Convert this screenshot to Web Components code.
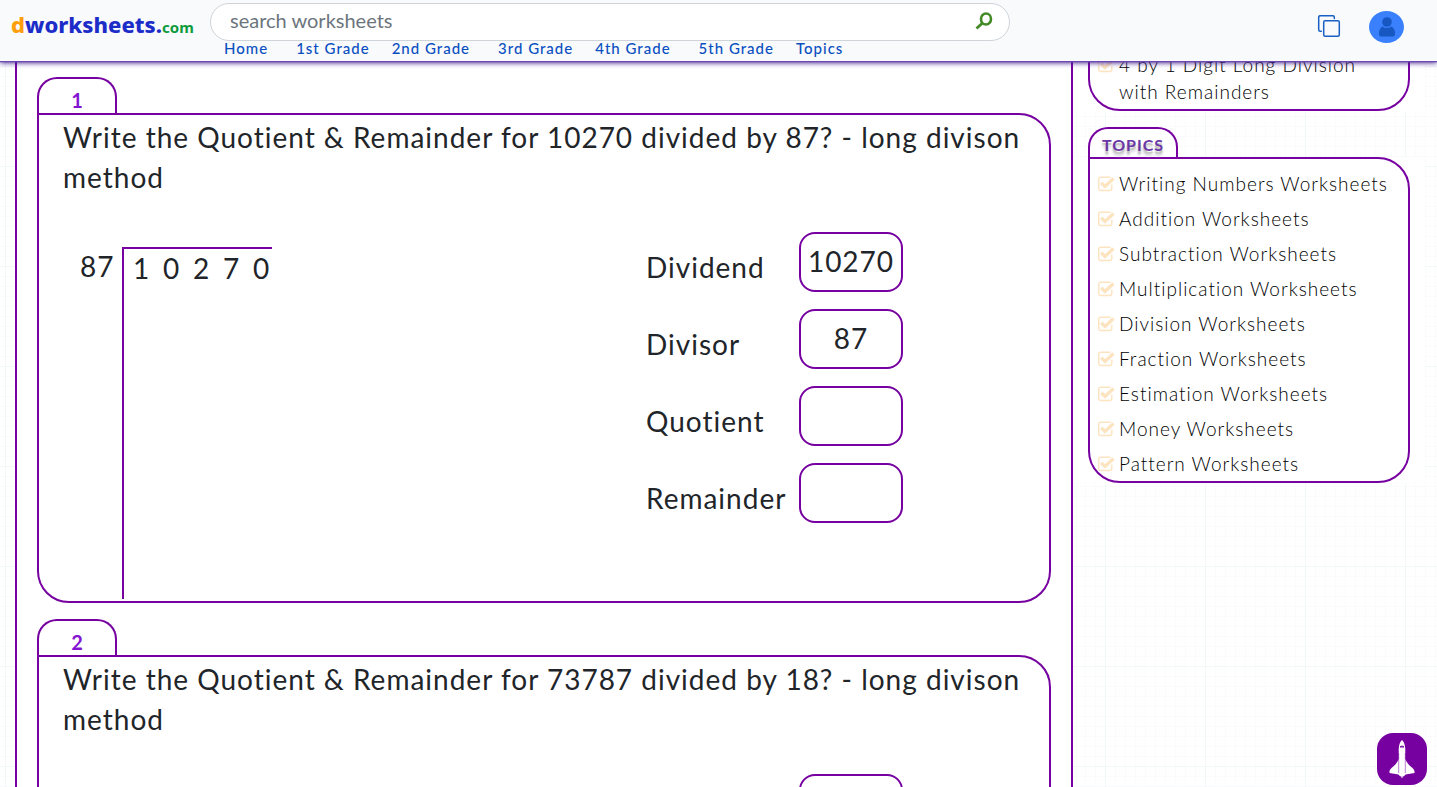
<!DOCTYPE html>
<html lang="en">
<head>
<meta charset="utf-8">
<title>dworksheets.com - Long Division Worksheets</title>
<style>
  :root { --purple: #7600a0; --ink: #212529; --link: #0a4fc0; }
  html { scrollbar-width: none; }
  body {
    margin: 0;
    color: var(--ink);
    font-family: Lato, "Noto Sans", sans-serif;
    background-color: #fff;
    background-image:
      linear-gradient(#f2f7f8 1px, transparent 1px),
      linear-gradient(90deg, #f2f7f8 1px, transparent 1px),
      linear-gradient(#fafbfc 1px, transparent 1px),
      linear-gradient(90deg, #fafbfc 1px, transparent 1px);
    background-size: 100px 100px, 100px 100px, 10px 10px, 10px 10px;
    background-position: 5px 66px, 5px 66px, 5px 6px, 5px 6px;
  }
</style>
</head>
<body>
<worksheet-page></worksheet-page>

<script>
const define = (name, html, setup) => {
  const template = document.createElement('template');
  template.innerHTML = `<style>*, ::before, ::after { box-sizing: border-box; }</style>` + html;
  customElements.define(name, class extends HTMLElement {
    constructor() {
      super();
      this.attachShadow({ mode: 'open' }).append(template.content.cloneNode(true));
    }
    connectedCallback() { if (setup) setup(this, this.shadowRoot); }
  });
};

define('site-logo', `
  <style>
    :host { display: block; }
    a { display: block; text-decoration: none; font: 800 22px/28px "Noto Sans", sans-serif; color: #1c2cc8; white-space: nowrap; }
    .d { color: #ff9d0a; }
    .com { color: #0f9a3c; font-size: 15px; font-weight: 700; }
  </style>
  <a href="#home"><span class="d">d</span>worksheets.<span class="com">com</span></a>`);

define('search-box', `
  <style>
    :host { display: block; }
    form { display: flex; align-items: center; height: 38px; padding: 0 16px 2px 19px; background: #fff; border: 1px solid #ced4da; border-radius: 19px; }
    input { flex: 1; min-width: 0; border: 0; padding: 0 0 2px; outline: 0; background: none; font: 400 20px/28px Lato, sans-serif; color: #212529; }
    input::placeholder { color: #6c757d; opacity: 1; }
    button { border: 0; padding: 0; background: none; display: flex; }
  </style>
  <form role="search">
    <input type="text" aria-label="search worksheets" placeholder="search worksheets">
    <button type="button" aria-label="Search">
      <svg width="18" height="18" viewBox="0 0 18 18" fill="none" stroke="#438a26">
        <ellipse cx="11" cy="7" rx="5" ry="5.500" stroke-width="2.600"/>
        <path d="M7.500 11 1.500 16.500" stroke-width="2.800"/>
      </svg>
    </button>
  </form>`);

define('grade-nav', `
  <style>
    :host { display: block; }
    nav { display: flex; gap: 28px; padding-left: 14px; }
    div { display: flex; gap: 22px; }
    a { font-size: 15px; line-height: 14px; font-weight: 500; letter-spacing: 1px; color: var(--link); text-decoration: none; white-space: nowrap; }
  </style>
  <nav>
    <div><a href="#home">Home</a></div>
    <div><a href="#g1">1st Grade</a><a href="#g2">2nd Grade</a></div>
    <div><a href="#g3">3rd Grade</a><a href="#g4">4th Grade</a></div>
    <div><a href="#g5">5th Grade</a><a href="#topics">Topics</a></div>
  </nav>`);

define('site-header', `
  <style>
    :host { display: block; position: sticky; top: 0; z-index: 2; }
    header { display: flex; align-items: flex-start; height: 61px; padding-right: 33px; background: #f8fafc; box-shadow: 0 1px 1px #6c48b0, 0 2px 5px #4a2b94; }
    site-logo { width: 210px; padding: 10px 0 0 11px; }
    .middle { width: 800px; padding-top: 3px; }
    .tools { margin-left: auto; display: flex; align-items: center; gap: 28px; padding-top: 11px; }
    button { display: flex; padding: 0; border: 0; background: none; }
    .avatar { width: 35px; height: 32px; border-radius: 50%; background: #3a80fc; align-items: center; justify-content: center; }
  </style>
  <header>
    <site-logo></site-logo>
    <div class="middle"><search-box></search-box><grade-nav></grade-nav></div>
    <div class="tools">
      <button type="button" aria-label="Copy">
        <svg width="24" height="24" viewBox="0 1 24 24" fill="none" stroke="#1a60c4" stroke-width="1.500" stroke-linejoin="round" stroke-linecap="round">
          <rect x="6.700" y="6.700" width="15.600" height="15.600" rx="1.500"/>
          <path d="M17.300 4.500V3.200A1.500 1.500 0 0 0 15.800 1.700H3.200A1.500 1.500 0 0 0 1.700 3.200V15.800A1.500 1.500 0 0 0 3.200 17.300H4.300"/>
        </svg>
      </button>
      <button type="button" class="avatar" aria-label="Account">
        <svg width="16" height="20" viewBox="0 0 16 20" fill="#1757c2">
          <circle cx="8" cy="5" r="4.800"/>
          <path d="M3.500 9.500Q8 12.600 12.500 9.500Q16 11.500 16 16V17.500Q16 19.500 14 19.500H2Q0 19.500 0 17.500V16Q0 11.500 3.500 9.500Z"/>
        </svg>
      </button>
    </div>
  </header>`);

define('tab-card', `
  <style>
    :host { display: block; }
    .tab { display: flex; justify-content: center; width: var(--tab-width, 80px); height: var(--tab-height, 36px); border: 2px solid var(--purple); border-bottom: 0; border-radius: 20px 20px 0 0; background: #fff; }
    .plate { margin: 0 -15px; padding: 0 15px; background: #fff; }
    .body { border: 2px solid var(--purple); border-radius: 0 32px 32px 32px; background: #fff; }
    :host([tabless]) .tab { display: none; }
  </style>
  <div class="tab"><slot name="tab"></slot></div>
  <div class="plate"><div class="body"><slot></slot></div></div>`);

define('division-question', `
  <style>
    :host { display: block; --tab-width: 80px; --tab-height: 36px; }
    h2 { margin: 0; font-size: 20px; line-height: 42px; font-weight: 700; color: #8414d2; }
    .body { display: flex; flex-direction: column; height: 486px; padding-top: 2px; font-size: 28px; font-weight: 400; letter-spacing: 1px; }
    p { margin: 0; padding: 0 24px; line-height: 40px; }
    .work { flex: 1; display: grid; grid-template-columns: 60% 1fr; padding-top: 35px; }
    .long { display: flex; padding: 15px 0 2px 41px; line-height: 38px; }
    .divisor { width: 42px; }
    .bracket { display: flex; width: 150px; border: solid var(--purple); border-width: 2px 0 0 2px; }
    .bracket span { flex: none; width: 30px; padding-left: 9px; }
    .answers { display: flex; flex-direction: column; gap: 17px; }
    .row { display: flex; }
    label { width: 154px; padding: 15px 0 0 1px; line-height: 40px; white-space: nowrap; }
    input { width: 104px; height: 60px; padding: 0 0 3px; border: 2px solid var(--purple); border-radius: 16px; background: #fff; text-align: center; font: inherit; letter-spacing: inherit; color: inherit; outline: 0; }
  </style>
  <tab-card>
    <h2 slot="tab"></h2>
    <div class="body">
      <p></p>
      <div class="work">
        <div class="long"><span class="divisor"></span><div class="bracket"></div></div>
        <div class="answers">
          <div class="row"><label for="dividend">Dividend</label><input id="dividend" type="text" readonly></div>
          <div class="row"><label for="divisor">Divisor</label><input id="divisor" type="text" readonly></div>
          <div class="row"><label for="quotient">Quotient</label><input id="quotient" type="text"></div>
          <div class="row"><label for="remainder">Remainder</label><input id="remainder" type="text"></div>
        </div>
      </div>
    </div>
  </tab-card>`, (host, root) => {
    const { number, dividend, divisor } = host.dataset;
    root.querySelector('h2').textContent = number;
    root.querySelector('p').textContent = `Write the Quotient & Remainder for ${dividend} divided by ${divisor}? - long divison method`;
    root.querySelector('.divisor').textContent = divisor;
    root.querySelector('.bracket').replaceChildren(...[...dividend].map(digit => {
      const cell = document.createElement('span');
      cell.textContent = digit;
      return cell;
    }));
    root.querySelector('#dividend').value = dividend;
    root.querySelector('#divisor').value = divisor;
  });

define('check-link', `
  <style>
    :host { display: block; }
    a { display: flex; padding: 4px 8px; font-size: 19px; line-height: 27px; font-weight: 300; letter-spacing: 1px; color: #000; text-decoration: none; }
    svg { flex: none; width: 17px; height: 16px; margin: 6px 4px 0 0; }
  </style>
  <a href="#worksheet">
    <svg viewBox="0 0 17 16" fill="none" stroke="#fde4c0">
      <path d="M13.800 8.500V12.500A2 2 0 0 1 11.800 14.500H2.700A2 2 0 0 1 .700 12.500V3.200A2 2 0 0 1 2.700 1.200H12.500" stroke-width="1.400"/>
      <path d="M3.200 6.800 7 10.500 15.500 2.500" stroke-width="3.400"/>
    </svg>
    <span><slot></slot></span>
  </a>`);

define('side-bar', `
  <style>
    :host { display: flex; flex-direction: column; gap: 16px; --tab-width: 90px; --tab-height: 30px; }
    .list { padding-top: 7px; }
    .related { display: flex; flex-direction: column; justify-content: flex-end; height: 116px; padding-right: 24px; }
    .topics { height: 322px; }
    h3 { margin: 0; font-size: 16px; line-height: 32px; font-weight: 700; letter-spacing: 1px; color: #6a35a5; text-shadow: 0 3px 1px #c4c2bd, 0 5px 3px #c9c7d8; }
  </style>
  <tab-card tabless>
    <div class="list related"><check-link>4 by 1 Digit Long Division with Remainders</check-link></div>
  </tab-card>
  <tab-card>
    <h3 slot="tab">TOPICS</h3>
    <div class="list topics">
      <check-link>Writing Numbers Worksheets</check-link>
      <check-link>Addition Worksheets</check-link>
      <check-link>Subtraction Worksheets</check-link>
      <check-link>Multiplication Worksheets</check-link>
      <check-link>Division Worksheets</check-link>
      <check-link>Fraction Worksheets</check-link>
      <check-link>Estimation Worksheets</check-link>
      <check-link>Money Worksheets</check-link>
      <check-link>Pattern Worksheets</check-link>
    </div>
  </tab-card>`);

define('shuttle-button', `
  <style>
    :host { display: block; position: fixed; right: 10px; bottom: 2px; z-index: 3; }
    button { display: flex; align-items: center; justify-content: center; width: 50px; height: 52px; padding: 0; border: 0; border-radius: 16px; background: var(--purple); }
  </style>
  <button type="button" aria-label="Back to top">
    <svg width="26" height="40" viewBox="0 0 26 40">
      <path fill="#fff" d="M13 1C15 2.500 16 6 16.300 10V20C18 24 20 26.500 23.500 29C25.300 30.500 25.600 32 25.500 34L16.500 35.500C15.500 37 14.500 37.500 13.500 37.500V39H12.500V37.500C11.500 37.500 10.500 37 9.500 35.500L.500 34C.400 32 .700 30.500 2.500 29C6 26.500 8 24 9.700 20V10C10 6 11 2.500 13 1Z"/>
      <path fill="none" stroke="#7600a0" stroke-width=".500" d="M9.700 14V34M16.300 14V34"/>
      <path fill="#7600a0" d="M11 7.500 12.500 6.300V7.200H13.500V6.300L15 7.500V8.600H11Z"/>
    </svg>
  </button>`);

define('worksheet-page', `
  <style>
    :host { display: block; }
    main { display: grid; grid-template-columns: minmax(0, 1fr) 322px; gap: 15px; padding: 0 27px 0 15px; align-items: start; }
    section { display: flex; flex-direction: column; gap: 16px; padding: 16px 20px; border: solid var(--purple); border-width: 0 2px; background: #fff; }
    side-bar { margin-top: -70px; }
  </style>
  <site-header></site-header>
  <main>
    <section>
      <division-question data-number="1" data-dividend="10270" data-divisor="87"></division-question>
      <division-question data-number="2" data-dividend="73787" data-divisor="18"></division-question>
    </section>
    <side-bar></side-bar>
  </main>
  <shuttle-button></shuttle-button>`);
</script>
</body>
</html>
